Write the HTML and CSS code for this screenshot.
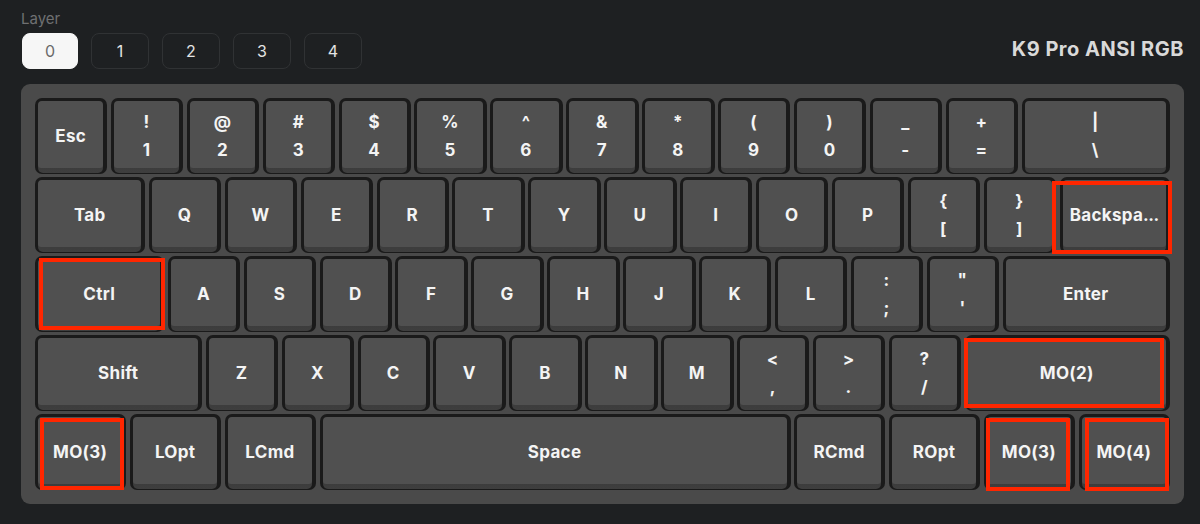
FILE: index.html
```html
<!DOCTYPE html>
<html>
<head>
<meta charset="utf-8">
<link rel="stylesheet" href="styles.css">
</head>
<body>
<div class="app">
  <div class="header">
    <div class="layers">
      <div class="layer-label">Layer</div>
      <div class="layer-btns">
        <button class="layer-btn active">0</button>
        <button class="layer-btn">1</button>
        <button class="layer-btn">2</button>
        <button class="layer-btn">3</button>
        <button class="layer-btn">4</button>
      </div>
    </div>
    <div class="title">K9 Pro ANSI RGB</div>
  </div>

  <div class="board">
    <div class="row">
      <div class="slot"><div class="key"><div class="skirt"><div class="cap">Esc</div></div></div></div>
      <div class="slot"><div class="key"><div class="skirt"><div class="cap two"><span>!</span><span>1</span></div></div></div></div>
      <div class="slot"><div class="key"><div class="skirt"><div class="cap two"><span>@</span><span>2</span></div></div></div></div>
      <div class="slot"><div class="key"><div class="skirt"><div class="cap two"><span>#</span><span>3</span></div></div></div></div>
      <div class="slot"><div class="key"><div class="skirt"><div class="cap two"><span>$</span><span>4</span></div></div></div></div>
      <div class="slot"><div class="key"><div class="skirt"><div class="cap two"><span>%</span><span>5</span></div></div></div></div>
      <div class="slot"><div class="key"><div class="skirt"><div class="cap two"><span>^</span><span>6</span></div></div></div></div>
      <div class="slot"><div class="key"><div class="skirt"><div class="cap two"><span>&amp;</span><span>7</span></div></div></div></div>
      <div class="slot"><div class="key"><div class="skirt"><div class="cap two"><span>*</span><span>8</span></div></div></div></div>
      <div class="slot"><div class="key"><div class="skirt"><div class="cap two"><span>(</span><span>9</span></div></div></div></div>
      <div class="slot"><div class="key"><div class="skirt"><div class="cap two"><span>)</span><span>0</span></div></div></div></div>
      <div class="slot"><div class="key"><div class="skirt"><div class="cap two"><span>_</span><span>-</span></div></div></div></div>
      <div class="slot"><div class="key"><div class="skirt"><div class="cap two"><span>+</span><span>=</span></div></div></div></div>
      <div class="slot u2"><div class="key"><div class="skirt"><div class="cap two"><span>|</span><span>\</span></div></div></div></div>
    </div>

    <div class="row">
      <div class="slot u15"><div class="key"><div class="skirt"><div class="cap">Tab</div></div></div></div>
      <div class="slot"><div class="key"><div class="skirt"><div class="cap">Q</div></div></div></div>
      <div class="slot"><div class="key"><div class="skirt"><div class="cap">W</div></div></div></div>
      <div class="slot"><div class="key"><div class="skirt"><div class="cap">E</div></div></div></div>
      <div class="slot"><div class="key"><div class="skirt"><div class="cap">R</div></div></div></div>
      <div class="slot"><div class="key"><div class="skirt"><div class="cap">T</div></div></div></div>
      <div class="slot"><div class="key"><div class="skirt"><div class="cap">Y</div></div></div></div>
      <div class="slot"><div class="key"><div class="skirt"><div class="cap">U</div></div></div></div>
      <div class="slot"><div class="key"><div class="skirt"><div class="cap">I</div></div></div></div>
      <div class="slot"><div class="key"><div class="skirt"><div class="cap">O</div></div></div></div>
      <div class="slot"><div class="key"><div class="skirt"><div class="cap">P</div></div></div></div>
      <div class="slot"><div class="key"><div class="skirt"><div class="cap two"><span>{</span><span>[</span></div></div></div></div>
      <div class="slot"><div class="key"><div class="skirt"><div class="cap two"><span>}</span><span>]</span></div></div></div></div>
      <div class="slot u15"><div class="key hl hl-bksp"><div class="skirt"><div class="cap"><span class="trunc">Backspa</span><span class="dots">...</span></div></div></div></div>
    </div>

    <div class="row">
      <div class="slot u175"><div class="key hl hl-ctrl"><div class="skirt"><div class="cap">Ctrl</div></div></div></div>
      <div class="slot"><div class="key"><div class="skirt"><div class="cap">A</div></div></div></div>
      <div class="slot"><div class="key"><div class="skirt"><div class="cap">S</div></div></div></div>
      <div class="slot"><div class="key"><div class="skirt"><div class="cap">D</div></div></div></div>
      <div class="slot"><div class="key"><div class="skirt"><div class="cap">F</div></div></div></div>
      <div class="slot"><div class="key"><div class="skirt"><div class="cap">G</div></div></div></div>
      <div class="slot"><div class="key"><div class="skirt"><div class="cap">H</div></div></div></div>
      <div class="slot"><div class="key"><div class="skirt"><div class="cap">J</div></div></div></div>
      <div class="slot"><div class="key"><div class="skirt"><div class="cap">K</div></div></div></div>
      <div class="slot"><div class="key"><div class="skirt"><div class="cap">L</div></div></div></div>
      <div class="slot"><div class="key"><div class="skirt"><div class="cap two"><span>:</span><span>;</span></div></div></div></div>
      <div class="slot"><div class="key"><div class="skirt"><div class="cap two"><span>"</span><span>'</span></div></div></div></div>
      <div class="slot u225"><div class="key"><div class="skirt"><div class="cap">Enter</div></div></div></div>
    </div>

    <div class="row">
      <div class="slot u225"><div class="key"><div class="skirt"><div class="cap">Shift</div></div></div></div>
      <div class="slot"><div class="key"><div class="skirt"><div class="cap">Z</div></div></div></div>
      <div class="slot"><div class="key"><div class="skirt"><div class="cap">X</div></div></div></div>
      <div class="slot"><div class="key"><div class="skirt"><div class="cap">C</div></div></div></div>
      <div class="slot"><div class="key"><div class="skirt"><div class="cap">V</div></div></div></div>
      <div class="slot"><div class="key"><div class="skirt"><div class="cap">B</div></div></div></div>
      <div class="slot"><div class="key"><div class="skirt"><div class="cap">N</div></div></div></div>
      <div class="slot"><div class="key"><div class="skirt"><div class="cap">M</div></div></div></div>
      <div class="slot"><div class="key"><div class="skirt"><div class="cap two"><span>&lt;</span><span>,</span></div></div></div></div>
      <div class="slot"><div class="key"><div class="skirt"><div class="cap two"><span>&gt;</span><span>.</span></div></div></div></div>
      <div class="slot"><div class="key"><div class="skirt"><div class="cap two"><span>?</span><span>/</span></div></div></div></div>
      <div class="slot u275"><div class="key hl hl-mo2"><div class="skirt"><div class="cap">MO(2)</div></div></div></div>
    </div>

    <div class="row">
      <div class="slot u125"><div class="key hl hl-mo3l"><div class="skirt"><div class="cap">MO(3)</div></div></div></div>
      <div class="slot u125"><div class="key"><div class="skirt"><div class="cap">LOpt</div></div></div></div>
      <div class="slot u125"><div class="key"><div class="skirt"><div class="cap">LCmd</div></div></div></div>
      <div class="slot u625"><div class="key"><div class="skirt"><div class="cap">Space</div></div></div></div>
      <div class="slot u125"><div class="key"><div class="skirt"><div class="cap">RCmd</div></div></div></div>
      <div class="slot u125"><div class="key"><div class="skirt"><div class="cap">ROpt</div></div></div></div>
      <div class="slot u125"><div class="key hl hl-mo3r"><div class="skirt"><div class="cap">MO(3)</div></div></div></div>
      <div class="slot u125"><div class="key hl hl-mo4"><div class="skirt"><div class="cap">MO(4)</div></div></div></div>
    </div>
  </div>
</div>
</body>
</html>
```

FILE: styles.css
```css
* { box-sizing: border-box; }

body {
  margin: 0;
  background: #1e2022;
  font-family: Inter, "Liberation Sans", sans-serif;
  color: #f2f2f2;
}

.app {
  padding: 9px 16px 0 21px;
}

.header {
  display: flex;
  justify-content: space-between;
  align-items: flex-end;
}

.layer-label {
  font-size: 15px;
  line-height: 19px;
  color: #6f7072;
  margin-bottom: 5px;
}

.layer-btns {
  display: flex;
  gap: 13px;
  padding-left: 1px;
}

.layer-btn {
  width: 58px;
  height: 36px;
  border: 1px solid #303234;
  border-radius: 8px;
  background: transparent;
  color: #e4e4e4;
  font-family: Inter, "Liberation Sans", sans-serif;
  font-size: 16px;
  padding: 0;
}

.layer-btn.active {
  width: 56px;
  background: #f6f6f6;
  border-color: #f6f6f6;
  color: #6a6a6a;
}

.title {
  font-size: 20px;
  font-weight: 700;
  color: #d9d9d9;
  margin-bottom: 8px;
  letter-spacing: 0.5px;
}

.board {
  margin-top: 15px;
  width: 1163px;
  background: #4a4a4a;
  border-radius: 9px;
  padding: 14px 10px 14px 14px;
  display: flex;
  flex-direction: column;
  gap: 3px;
}

.row {
  display: flex;
  height: 76px;
}

.slot {
  --u: 1;
  flex: 0 0 calc(var(--u) * 75.9px);
  padding-right: 3.5px;
}
.u125 { --u: 1.25; }
.u15 { --u: 1.5; }
.u175 { --u: 1.75; }
.u2 { --u: 2; }
.u225 { --u: 2.25; }
.u275 { --u: 2.75; }
.u625 { --u: 6.25; }

.key {
  position: relative;
  height: 100%;
  background: #1a1a1a;
  border-radius: 7px;
  padding: 3px 4px 1px 3px;
}

.skirt {
  height: 100%;
  background: linear-gradient(to bottom, #2a2a2a, #3e3e3e);
  border-radius: 5px;
  padding-bottom: 5px;
}

.cap {
  height: 100%;
  background: #505050;
  border-radius: 4px 4px 3px 3px;
  display: flex;
  align-items: center;
  justify-content: center;
  font-size: 17px;
  font-weight: 700;
  letter-spacing: 0.3px;
  color: #f4f4f4;
  white-space: nowrap;
  padding-top: 2px;
}

.cap.two {
  flex-direction: column;
  line-height: 28px;
}

.dots {
  letter-spacing: -0.5px;
}

.hl::after {
  content: "";
  position: absolute;
  top: 2px;
  bottom: 0;
  left: 3px;
  right: 3px;
  border: 4px solid #ff2600;
}

.hl-bksp::after { left: -8px; right: -2px; top: 4px; bottom: -1px; }
.hl-ctrl::after { left: 4px; right: -1px; top: 2px; bottom: 2px; }
.hl-mo2::after { left: -1px; right: 6px; top: 3px; bottom: 3px; }
.hl-mo3l::after { left: 5px; right: 2px; top: 4px; bottom: 0px; }
.hl-mo3r::after { left: 2px; right: 5px; top: 4px; bottom: -1px; }
.hl-mo4::after { left: 6px; right: 1px; top: 4px; bottom: -1px; }
```
